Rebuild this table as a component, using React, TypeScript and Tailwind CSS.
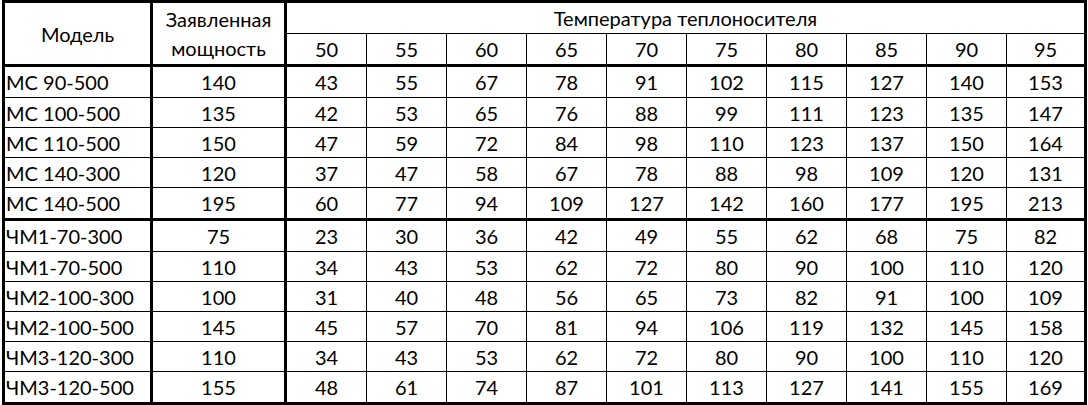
import React from "react";

const temps = [50, 55, 60, 65, 70, 75, 80, 85, 90, 95];

const rows: [string, number, number[]][] = [
  ["МС 90-500", 140, [43, 55, 67, 78, 91, 102, 115, 127, 140, 153]],
  ["МС 100-500", 135, [42, 53, 65, 76, 88, 99, 111, 123, 135, 147]],
  ["МС 110-500", 150, [47, 59, 72, 84, 98, 110, 123, 137, 150, 164]],
  ["МС 140-300", 120, [37, 47, 58, 67, 78, 88, 98, 109, 120, 131]],
  ["МС 140-500", 195, [60, 77, 94, 109, 127, 142, 160, 177, 195, 213]],
  ["ЧМ1-70-300", 75, [23, 30, 36, 42, 49, 55, 62, 68, 75, 82]],
  ["ЧМ1-70-500", 110, [34, 43, 53, 62, 72, 80, 90, 100, 110, 120]],
  ["ЧМ2-100-300", 100, [31, 40, 48, 56, 65, 73, 82, 91, 100, 109]],
  ["ЧМ2-100-500", 145, [45, 57, 70, 81, 94, 106, 119, 132, 145, 158]],
  ["ЧМ3-120-300", 110, [34, 43, 53, 62, 72, 80, 90, 100, 110, 120]],
  ["ЧМ3-120-500", 155, [48, 61, 74, 87, 101, 113, 127, 141, 155, 169]],
];

export default function App() {
  return (
    <div className="bg-white w-[1088px] h-[405px] overflow-hidden">
      <div
        className="ml-[2px] w-[1085px] h-[405px] border-[3px] border-black grid grid-cols-[148px_134px_repeat(9,80px)_77px] grid-rows-[31px_33px_31px_30px_30px_30px_33px_31px_30px_30px_30px_30px_30px] text-[20px] text-black"
        style={{ fontFamily: "Lato, 'Open Sans', sans-serif" }}
      >
        <div className="row-span-2 border-r-[3px] border-b-[3px] border-black flex items-center justify-center">
          Модель
        </div>
        <div className="row-span-2 border-r-[3px] border-b-[3px] border-black flex flex-col items-center justify-center leading-[29px]">
          <span>Заявленная</span>
          <span>мощность</span>
        </div>
        <div className="col-span-10 border-b border-black flex items-center justify-center">
          Температура теплоносителя
        </div>
        {temps.map((t, i) => (
          <div
            key={t}
            className={`flex items-center justify-center border-b-[3px] border-black ${i < 9 ? "border-r" : ""}`}
          >
            {t}
          </div>
        ))}
        {rows.map(([name, power, vals], r) => {
          const last = r === rows.length - 1;
          const thick = r === 4;
          const bb = last ? "" : thick ? "border-b-[3px]" : "border-b";
          return (
            <React.Fragment key={name}>
              <div className={`flex items-center pl-[1px] border-r-[3px] border-black ${bb}`}>{name}</div>
              <div className={`flex items-center justify-center border-r-[3px] border-black ${bb}`}>{power}</div>
              {vals.map((v, i) => (
                <div
                  key={i}
                  className={`flex items-center justify-center border-black ${bb} ${i < 9 ? "border-r" : ""}`}
                >
                  {v}
                </div>
              ))}
            </React.Fragment>
          );
        })}
      </div>
    </div>
  );
}
